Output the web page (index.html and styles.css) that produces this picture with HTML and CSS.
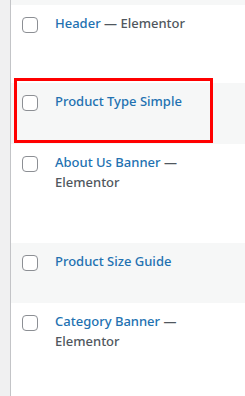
FILE: index.html
```html
<!DOCTYPE html>
<html lang="en">
<head>
  <meta charset="UTF-8">
  <meta name="viewport" content="width=device-width, initial-scale=1.0">
  <title>Templates</title>
  <link rel="stylesheet" href="styles.css">
</head>
<body>
  <div class="list">
    <div class="row alt stub"></div>
    <div class="row h78">
      <div class="check"><span class="box"></span></div>
      <div class="title"><a href="#">Header</a> <span class="state">— Elementor</span></div>
    </div>
    <div class="row alt h61">
      <div class="check"><span class="box"></span></div>
      <div class="title"><a href="#">Product Type Simple</a></div>
    </div>
    <div class="row h99">
      <div class="check"><span class="box"></span></div>
      <div class="title"><a href="#">About Us Banner</a> <span class="state">— Elementor</span></div>
    </div>
    <div class="row alt h60">
      <div class="check"><span class="box"></span></div>
      <div class="title"><a href="#">Product Size Guide</a></div>
    </div>
    <div class="row h99">
      <div class="check"><span class="box"></span></div>
      <div class="title"><a href="#">Category Banner</a> <span class="state">— Elementor</span></div>
    </div>
    <div class="highlight"></div>
  </div>
</body>
</html>
```

FILE: styles.css
```css
body {
  margin: 0;
  background-color: #f0f0f1;
  font-family: "Noto Sans", Arial, sans-serif;
  font-size: 13px;
  overflow: hidden;
}
.list {
  position: relative;
  margin-left: 10px;
  border-left: 1px solid #c3c4c7;
  background-color: #fff;
  min-height: 396px;
}
.row {
  display: flex;
  align-items: flex-start;
  background-color: #fff;
}
.row.alt {
  background-color: #f6f7f7;
}
.stub {
  height: 5px;
}
.h78 { height: 78px; }
.h61 { height: 61px; }
.h99 { height: 99px; }
.h60 { height: 60px; }
.check {
  width: 44px;
  padding: 12px 0 0 11px;
  box-sizing: border-box;
}
.box {
  display: block;
  width: 16px;
  height: 16px;
  box-sizing: border-box;
  border: 1px solid #8c8f94;
  border-radius: 4px;
  background-color: #fff;
}
.title {
  width: 145px;
  padding-top: 8px;
  line-height: 20px;
  font-weight: 500;
  color: #50575e;
}
.title a {
  color: #2271b1;
  text-decoration: none;
}
.highlight {
  position: absolute;
  left: 3px;
  top: 78px;
  width: 199px;
  height: 65px;
  box-sizing: border-box;
  border: 3px solid #ff0000;
}
```
